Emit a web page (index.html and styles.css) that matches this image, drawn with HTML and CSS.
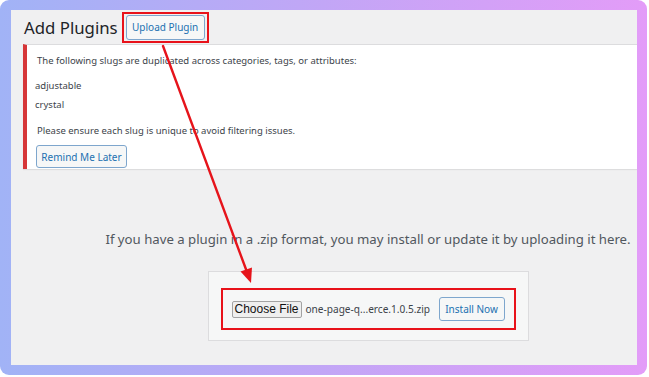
FILE: index.html
```html
<!DOCTYPE html>
<html lang="en">
<head>
    <meta charset="UTF-8">
    <title>Add Plugins</title>
    <link rel="stylesheet" href="styles.css">
</head>

<body>
    <div class="frame">
        <div class="screen">
            <div class="heading">
                <h1>Add Plugins</h1>
                <span class="mark">
                    <button class="btn upload-btn">Upload Plugin</button>
                </span>
            </div>

            <div class="notice">
                <p class="first">The following slugs are duplicated across categories, tags, or attributes:</p>
                <p class="slug">adjustable</p>
                <p class="slug">crystal</p>
                <p class="last">Please ensure each slug is unique to avoid filtering issues.</p>
                <button class="btn remind-btn">Remind Me Later</button>
            </div>

            <div class="upload">
                <p class="hint">If you have a plugin in a .zip format, you may install or update it by uploading it here.</p>
                <div class="upload-box">
                    <div class="mark upload-form">
                        <span class="choose">Choose File</span>
                        <span class="filename">one-page-q...erce.1.0.5.zip</span>
                        <button class="btn install-btn">Install Now</button>
                    </div>
                </div>
            </div>
        </div>

        <!-- annotation arrow from the button to the form -->
        <svg class="arrow" width="649" height="377" viewBox="0 0 649 377">
            <line x1="163" y1="46" x2="247" y2="272" stroke="#e6141b" stroke-width="2.4" stroke-linecap="round"/>
            <polygon points="251,283 240.5,271.5 252,267.5" fill="#e6141b"/>
        </svg>
    </div>
</body>
</html>
```

FILE: styles.css
```css
body {
    margin: 0;
    background: #fff;
    font-family: 'Noto Sans', 'Open Sans', sans-serif;
}

.frame {
    position: relative;
    width: 647px;
    height: 375px;
    box-sizing: border-box;
    padding: 10px 10px 10px 11px;
    border-radius: 9px;
    background-image: linear-gradient(90deg, #a1b3f6, #c2a6f6 50%, #e39cf8);
}

.screen {
    height: 355px;
    background-color: #f0f0f1;
    overflow: hidden;
}

.heading {
    display: flex;
    align-items: center;
    height: 34px;
    padding-left: 13px;
}

h1 {
    margin: 0;
    font-size: 16.8px;
    font-weight: 400;
    color: #1d2327;
}

.mark {
    display: inline-flex;
    border: 2px solid #e8121a;
}

.heading .mark {
    margin-left: 4px;
    padding: 1px 2px;
}

.btn {
    font-family: inherit;
    font-size: 10px;
    color: #2271b1;
    background-color: #f6f7f7;
    border: 1px solid #7ea6cd;
    border-radius: 3px;
    padding: 0;
    cursor: pointer;
}

.upload-btn { width: 79px; height: 25px; }
.remind-btn { width: 91px; height: 23px; margin-left: -1px; }
.install-btn { width: 66px; height: 24px; margin-left: auto; }

.notice {
    margin-left: 12px;
    padding: 9px 0 1px 10px;
    background-color: #fff;
    border-top: 1px solid #dcdcde;
    border-left: 4px solid #d63638;
    box-shadow: 0 1px 1px rgba(0, 0, 0, 0.08);
    font-size: 9.5px;
    line-height: 14px;
    color: #3c434a;
}

.notice p { margin: 0; }
.notice .first { margin-bottom: 11px; }
.notice .slug { margin-left: -2px; margin-bottom: 5px; }
.notice .last { margin-top: 12px; margin-bottom: 7px; }

.upload {
    padding-left: 88px;
    text-align: center;
}

.hint {
    margin: 61px 0 23px;
    font-size: 13.2px;
    line-height: 18px;
    color: #50575e;
}

.upload-box {
    display: inline-block;
    width: 321px;
    height: 70px;
    box-sizing: border-box;
    padding: 16px 12px 0 12px;
    background-color: #f6f7f7;
    border: 1px solid #dcdcde;
    text-align: left;
}

.upload-form {
    display: flex;
    align-items: center;
    height: 42px;
    box-sizing: border-box;
    padding: 0 9px 0 9px;
}

.choose {
    display: inline-flex;
    align-items: center;
    justify-content: center;
    width: 70px;
    height: 17px;
    box-sizing: border-box;
    font-family: 'Liberation Sans', Arial, sans-serif;
    font-size: 12px;
    color: #111;
    background-color: #efefef;
    border: 1px solid #a3a3a3;
    border-radius: 2px;
}

.filename {
    margin-left: 4px;
    font-size: 10.1px;
    color: #3c434a;
}

.arrow {
    position: absolute;
    left: 0;
    top: 0;
    pointer-events: none;
}
```
